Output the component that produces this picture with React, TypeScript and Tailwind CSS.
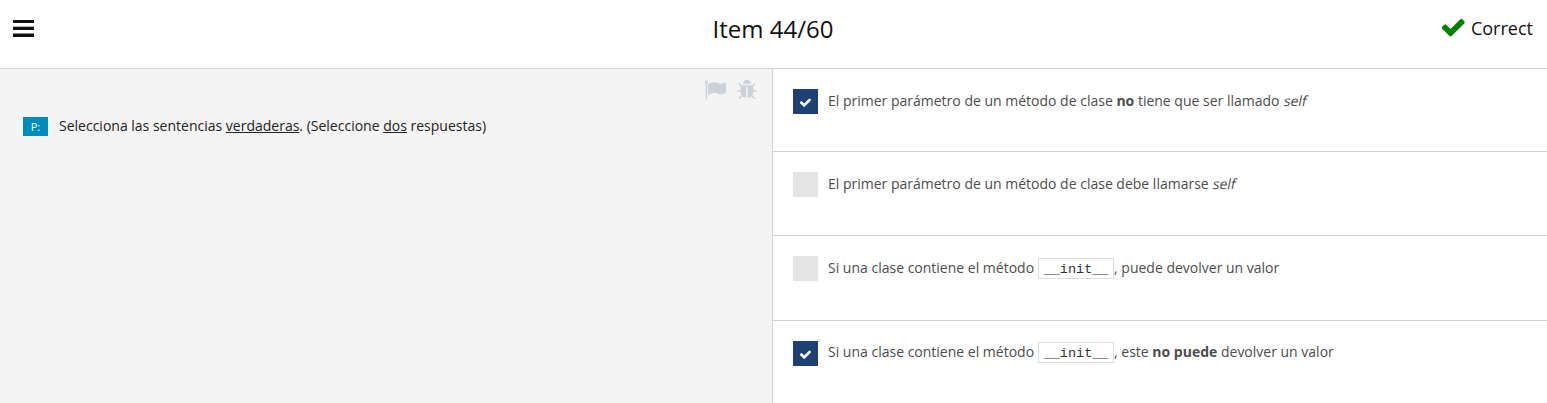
import React from "react";

function Glyph({ d, className }: { d: string; className: string }) {
  return (
    <svg viewBox="0 0 1792 1792" fill="currentColor" className={`shrink-0 ${className}`} aria-hidden="true">
      <path d={d} />
    </svg>
  );
}

const CHECK =
  "M1671 566q0 40-28 68l-724 724-136 136q-28 28-68 28t-68-28l-136-136-362-362q-28-28-28-68t28-68l136-136q28-28 68-28t68 28l294 295 656-657q28-28 68-28t68 28l136 136q28 28 28 68z";
const FLAG =
  "M320 256q0 72-64 110v1266q0 13-9.5 22.5t-22.5 9.5h-64q-13 0-22.5-9.5t-9.5-22.5v-1266q-64-38-64-110 0-53 37.5-90.5t90.5-37.5 90.5 37.5 37.5 90.5zm1472 64v763q0 25-12.5 38.5t-39.5 27.5q-215 116-369 116-61 0-123.5-22t-108.5-48-115.5-48-142.5-22q-192 0-464 146-17 9-33 9-26 0-45-19t-19-45v-742q0-32 31-55 21-14 79-43 236-120 421-120 107 0 200 29t219 88q38 19 88 19 54 0 117.5-21t110-47 88-47 54.5-21q26 0 45 19t19 45z";
const BUG =
  "M1696 960q0 26-19 45t-45 19h-224q0 171-67 290l208 209q19 19 19 45t-19 45q-18 19-45 19t-45-19l-198-197q-5 5-15 13t-42 28.5-65 36.5-82 29-97 13v-896h-128v896q-51 0-101.5-13.5t-87-33-66-39-43.5-32.5l-15-14-183 207q-20 21-48 21-24 0-43-16-19-18-20.5-44.5t15.5-46.5l202-227q-58-114-58-274h-224q-26 0-45-19t-19-45 19-45 45-19h224v-294l-173-173q-19-19-19-45t19-45 45-19 45 19l173 173h844l173-173q19-19 45-19t45 19 19 45-19 45l-173 173v294h224q26 0 45 19t19 45zm-480-576h-640q0-133 93.5-226.5t226.5-93.5 226.5 93.5 93.5 226.5z";

function Box({ checked }: { checked: boolean }) {
  return (
    <span className={`flex size-[25px] shrink-0 items-center justify-center ${checked ? "bg-[#1f4073]" : "bg-[#e4e4e4]"}`}>
      {checked && <Glyph d={CHECK} className="mt-px size-[13px] text-white" />}
    </span>
  );
}

function Code() {
  return (
    <code className="-mt-px ml-1 inline-flex h-[21px] w-[76px] items-center justify-center border border-[#ddd] pt-[2px] align-baseline font-['Liberation_Mono',monospace] text-[13.5px] leading-[17px] text-[#333]">
      __init__
    </code>
  );
}

function Slanted({ children }: { children: React.ReactNode }) {
  return <em className="inline-block origin-[50%_70%] -skew-x-[12deg] not-italic">{children}</em>;
}

function Answer({ checked, className, textClass = "", children }: { checked: boolean; className: string; textClass?: string; children: React.ReactNode }) {
  return (
    <label className={`flex items-start gap-2.5 pl-5 pt-5 ${className}`}>
      <Box checked={checked} />
      <span className={`h-6 whitespace-nowrap text-[14px] leading-[24px] text-[#4d4d4d] ${textClass}`}>{children}</span>
    </label>
  );
}

export default function App() {
  return (
    <div className="flex h-[403px] w-full flex-col overflow-hidden bg-white font-['Open_Sans',sans-serif] text-[#111]">
      <header className="grid h-[69px] shrink-0 grid-cols-3 border-b border-[#d4d4d4] pl-[13px] pr-[14px]">
        <svg viewBox="0 0 21 17" className="mt-5 h-[17px] w-[21px]" fill="#111" aria-hidden="true">
          <rect y="-0.3" width="21" height="3.3" />
          <rect y="6.7" width="21" height="3.3" />
          <rect y="13.5" width="21" height="3.5" />
        </svg>
        <h1 className="pt-[11px] text-center text-[24px] leading-[36px]">Item 44/60</h1>
        <div className="flex items-start justify-end gap-1 pt-4 text-[18px] leading-[24px]">
          <Glyph d={CHECK} className="-mt-[2px] size-[26.5px] text-[#008000]" />
          <span>Correct</span>
        </div>
      </header>
      <main className="flex grow">
        <section className="w-[773px] shrink-0 border-r border-[#d4d4d4] bg-[#f4f4f4]">
          <div className="flex h-[42px] justify-end gap-2.5 pr-[14px] pt-2.5 text-[#ccd2db]">
            <Glyph d={FLAG} className="size-[22px]" />
            <Glyph d={BUG} className="size-[22px]" />
          </div>
          <div className="flex items-start gap-[11px] pl-[23px] pt-1.5">
            <span className="h-[19px] w-[25px] bg-[#008cba] text-center text-[11px] leading-[20px] text-white">P:</span>
            <p className="-mt-0.5 whitespace-nowrap text-[14px] leading-[22px] text-[#222]">
              Selecciona las sentencias <u>verdaderas</u>. (Seleccione <u>dos</u> respuestas)
            </p>
          </div>
        </section>
        <section className="grow">
          <Answer checked className="h-[83px] border-b border-[#d4d4d4]">
            El primer parámetro de un método de clase <b>no</b> tiene que ser llamado <Slanted>self</Slanted>
          </Answer>
          <Answer checked={false} className="h-[84px] border-b border-[#d4d4d4]">
            El primer parámetro de un método de clase debe llamarse <Slanted>self</Slanted>
          </Answer>
          <Answer checked={false} className="h-[85px] border-b border-[#d4d4d4]">
            Si una clase contiene el método<Code />, puede devolver un valor
          </Answer>
          <Answer checked className="h-[82px]" textClass="-mt-px">
            Si una clase contiene el método<Code />, este <b>no puede</b> devolver un valor
          </Answer>
        </section>
      </main>
    </div>
  );
}
